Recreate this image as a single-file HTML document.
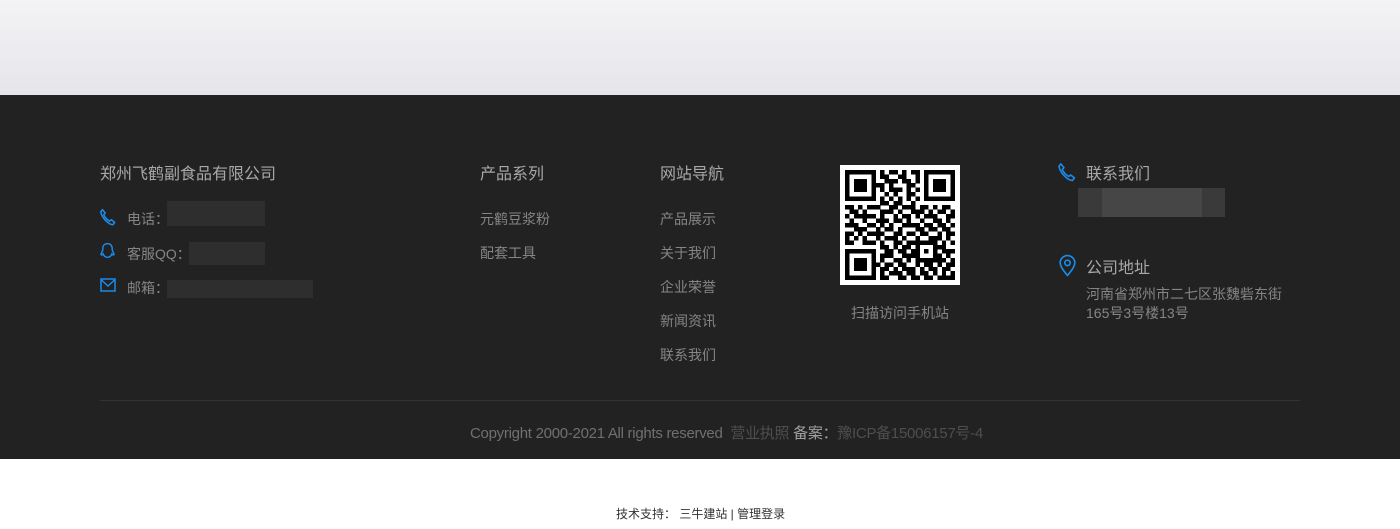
<!DOCTYPE html>
<html><head><meta charset="utf-8"><style>
*{margin:0;padding:0;box-sizing:border-box}
body{width:1400px;height:529px;overflow:hidden;background:#fff;font-family:"Liberation Sans","Noto Sans CJK SC",sans-serif;position:relative}
.banner{position:absolute;left:0;top:0;width:1400px;height:95px;background:linear-gradient(#f3f3f6,#e6e6ea)}
.foot{position:absolute;left:0;top:95px;width:1400px;height:364px;background:#222}
.a{position:absolute;white-space:nowrap}
.t{font-size:16px;color:#a8a8a8}
.i{font-size:14px;color:#858585}
.blur{position:absolute;background:#2e2e2e}
.line{position:absolute;left:100px;top:400px;width:1200px;height:1px;background:#333}
</style></head><body>
<div class="banner"></div>
<div class="foot"></div>
<div class="a t" style="left:100px;top:160px">郑州飞鹤副食品有限公司</div>
<svg class="a" style="left:99px;top:208px" width="18" height="19" viewBox="0 0 16 17"><path d="M3 1.5l2.5 3-1.3 1.6c1 2.3 2.8 4.3 5.2 5.6l1.6-1.2 3 2.4-1.6 2.1C8.500 14.700 2.600 9.200 1.500 3.500z" fill="none" stroke="#1a8be8" stroke-width="1.4" stroke-linejoin="round"/></svg>
<div class="a i" style="left:127px;top:209px">电话：</div>
<div class="blur" style="left:167px;top:201px;width:98px;height:25px"></div>
<svg class="a" style="left:99px;top:242px" width="17" height="19" viewBox="0 0 16 18"><path d="M8 1.5c-3 0-4.5 2.2-4.5 4.8v1.5L2 11c-.5 1.300.3 1.700 1.300.9l.6-.6c.6 1.800 2 3.200 4.100 3.200s3.500-1.400 4.100-3.200l.6.6c1 .8 1.800.4 1.300-.9L12.500 7.800V6.300C12.500 3.700 11 1.500 8 1.500z" fill="none" stroke="#1a8be8" stroke-width="1.4"/></svg>
<div class="a i" style="left:127px;top:244px">客服QQ：</div>
<div class="blur" style="left:189px;top:242px;width:76px;height:23px"></div>
<svg class="a" style="left:100px;top:278px" width="16" height="14" viewBox="0 0 16 14"><rect x="1" y="1" width="14" height="12" fill="none" stroke="#1a8be8" stroke-width="1.5"/><path d="M1.500 2l6.500 6 6.500-6" fill="none" stroke="#1a8be8" stroke-width="1.5"/></svg>
<div class="a i" style="left:127px;top:278px">邮箱：</div>
<div class="blur" style="left:167px;top:280px;width:146px;height:18px"></div>

<div class="a t" style="left:480px;top:160px">产品系列</div>
<div class="a i" style="left:480px;top:209px">元鹤豆浆粉</div>
<div class="a i" style="left:480px;top:243px">配套工具</div>

<div class="a t" style="left:660px;top:160px">网站导航</div>
<div class="a i" style="left:660px;top:209px">产品展示</div>
<div class="a i" style="left:660px;top:243px">关于我们</div>
<div class="a i" style="left:660px;top:277px">企业荣誉</div>
<div class="a i" style="left:660px;top:311px">新闻资讯</div>
<div class="a i" style="left:660px;top:345px">联系我们</div>

<svg id="qr" class="a" style="left:840px;top:165px" width="120" height="120" viewBox="0 0 27.300 27.300" shape-rendering="crispEdges"><rect width="27.300" height="27.300" fill="#fff"/></svg>
<div class="a i" style="left:851px;top:303px">扫描访问手机站</div>

<svg class="a" style="left:1057px;top:162px" width="20" height="21" viewBox="0 0 16 17"><path d="M3 1.5l2.5 3-1.3 1.6c1 2.300 2.800 4.300 5.200 5.600l1.600-1.200 3 2.400-1.600 2.100C8.500 14.700 2.600 9.200 1.500 3.500z" fill="none" stroke="#1a8be8" stroke-width="1.3" stroke-linejoin="round"/></svg>
<div class="a t" style="left:1086px;top:160px">联系我们</div>
<div class="blur" style="left:1078px;top:188px;width:147px;height:29px;background:#3a3a3a"></div>
<div class="blur" style="left:1102px;top:188px;width:100px;height:29px;background:#464646"></div>
<svg class="a" style="left:1058px;top:254px" width="19" height="23" viewBox="0 0 18 22"><path d="M9 20.500S2 13 2 8.500a7 7 0 0114 0C16 13 9 20.500 9 20.500z" fill="none" stroke="#1a8be8" stroke-width="1.6"/><circle cx="9" cy="8.500" r="2.600" fill="none" stroke="#1a8be8" stroke-width="1.6"/></svg>
<div class="a t" style="left:1086px;top:254px">公司地址</div>
<div class="a i" style="left:1086px;top:285px;line-height:19px">河南省郑州市二七区张魏砦东街<br>165号3号楼13号</div>

<div class="line"></div>
<div class="a" style="left:470px;top:422px;font-size:15px;letter-spacing:-0.28px;color:#707070">Copyright 2000-2021 All rights reserved&nbsp; <span style="color:#4e4e4e">营业执照</span> <span style="color:#a0a0a0">备案：</span><span style="color:#4e4e4e">豫ICP备15006157号-4</span></div>
<div class="a" style="left:616px;top:505px;font-size:12px;color:#333">技术支持： 三牛建站 | 管理登录</div>
<script>
var r=["1111111010110101101111111","1000001011001100101000001","1011101001110110101011101","1011101110100011001011101","1011101010111010101011101","1000001001010011001000001","1111111010101010101111111","0000000011011001000000000","1101011100110111011010110","0110100011101001110101101","1011111010010110101110011","0100100111011010010011010","1110011010100111101101101","0011100101101000110110110","1101011110011011011001011","1010100101110100100111010","1100111010011011111110101","0000000011010110100011100","1111111001101101101010111","1000001011100111100011010","1011101010011010111111101","1011101101101100101101011","1011101011010111010110110","1000001010111011011010101","1111111011001101101101111"];
var s=document.getElementById('qr'),h='';
for(var y=0;y<25;y++)for(var x=0;x<25;x++)if(r[y][x]=='1')h+='<rect x="'+(x+1.15)+'" y="'+(y+1.15)+'" width="1.02" height="1.02" fill="#000"/>';
s.innerHTML+=h;
</script>
</body></html>
